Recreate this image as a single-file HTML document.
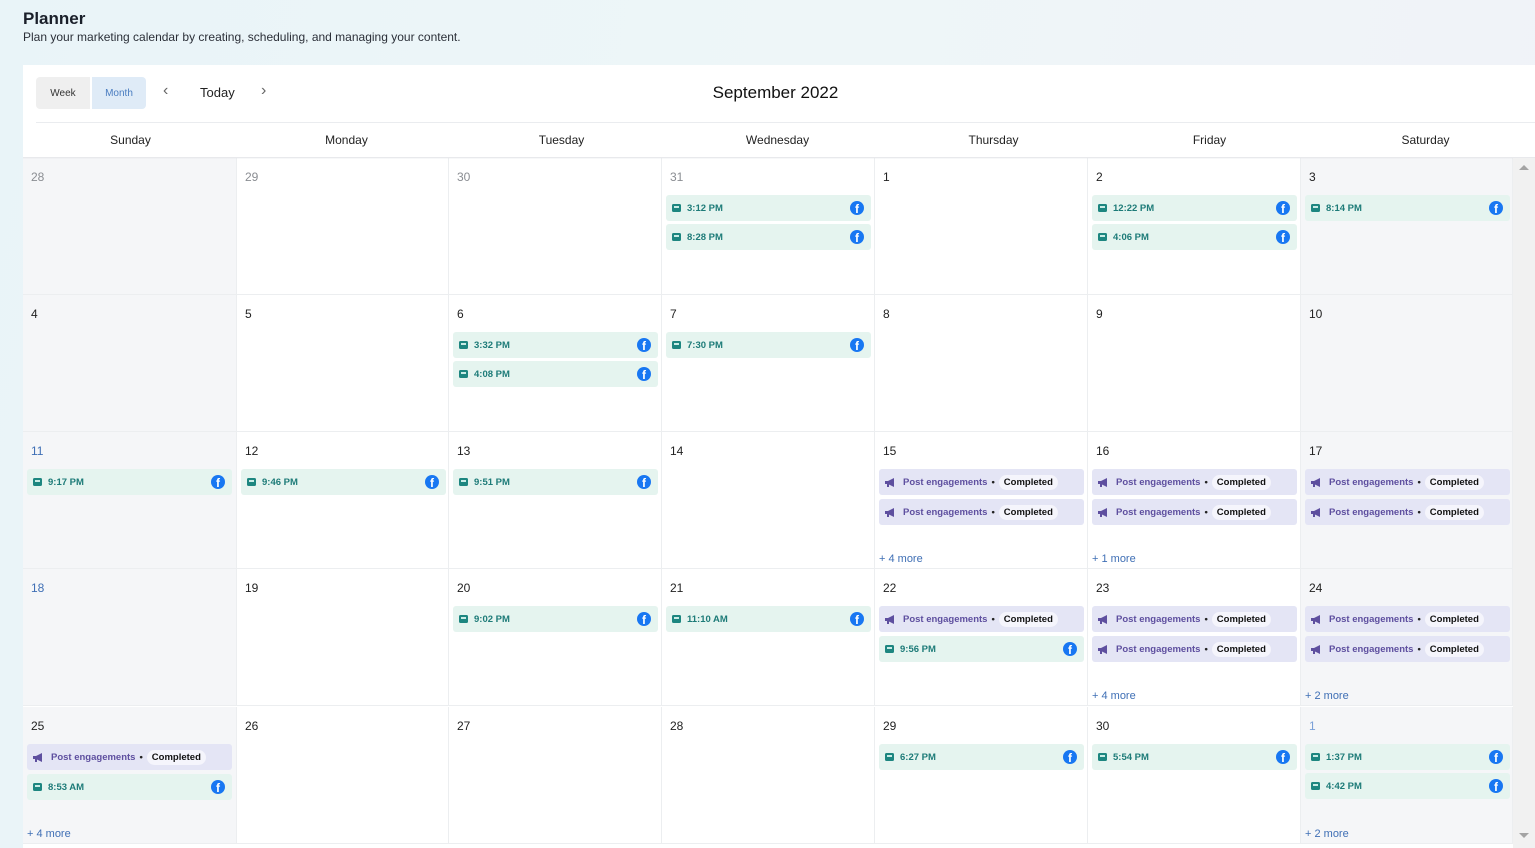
<!DOCTYPE html>
<html><head><meta charset="utf-8"><style>
*{box-sizing:border-box;margin:0;padding:0}
body{width:1535px;height:848px;overflow:hidden;font-family:"Liberation Sans",sans-serif;background:linear-gradient(100deg,#e9f4f8 0%,#eef6f8 50%,#f1f2f8 100%);position:relative}
h1{position:absolute;left:23px;top:9px;font-size:17px;font-weight:bold;color:#1a1f2a}
.sub{position:absolute;left:23px;top:30px;font-size:12px;color:#2b2f38}
.card{position:absolute;left:23px;top:65px;width:1512px;height:783px;background:#fff}
.tog{position:absolute;left:13px;top:12px;height:32px;width:110px;border-radius:4px;overflow:hidden;display:flex;font-size:10px}
.tog div{width:54px;display:flex;align-items:center;justify-content:center}
.wk{background:#efefef;color:#333;margin-right:2px}.mo{background:#dfebf7;color:#4a7dc0}
.nav{position:absolute;top:20px;font-size:13px;color:#222}
.title{position:absolute;left:0;width:1505px;text-align:center;top:18px;font-size:17px;color:#111}
.hline{position:absolute;left:13px;right:0;top:57px;border-top:1px solid #eaecef}
.dow{position:absolute;top:57px;height:35px;width:215px;text-align:center;line-height:36px;font-size:12px;color:#222}
.shadow{position:absolute;left:0;right:0;top:92px;height:2px;background:linear-gradient(#e0e2e5,#fff0)}
.cell{position:absolute;width:213px;height:137px;border-right:1px solid #eceef0;border-bottom:1px solid #eceef0;background:#fff}
.we{background:#f5f6f8}
.n{position:absolute;left:8px;top:12px;font-size:12px;color:#222}
.g{color:#8a8d92}.b{color:#3f6fb5}
.chips{position:absolute;left:4px;top:37px;width:205px}
.t{height:26px;background:#e5f4ef;border-radius:3px;margin-bottom:3px;display:flex;align-items:center;padding-left:6px;font-size:9.5px;font-weight:bold;color:#1d7b78;position:relative}
.t i{display:inline-block;width:9px;height:8px;background:#1d8680;border-radius:1.5px;margin-right:6px;position:relative}
.t i:after{content:"";position:absolute;left:2px;top:2px;width:5px;height:2px;background:#c9ece6}
.fb{position:absolute;right:7px;top:6px;width:14px;height:14px;border-radius:50%;background:#1877f2;color:#fff;font-size:12px;font-weight:bold;text-align:center;line-height:17px;overflow:hidden;font-family:"Liberation Sans",sans-serif}
.e{height:26px;background:#e4e5f5;border-radius:3px;margin-bottom:4px;display:flex;align-items:center;padding-left:6px;font-size:9.5px;font-weight:bold;color:#5e4f9f}
.e svg{margin-right:7px}
.e .dot{color:#222;margin:0 4px}
.e .p{background:#f5f5fc;color:#111;border-radius:8px;padding:2px 5px}
.more{position:absolute;left:4px;top:121px;font-size:11px;color:#3f6fb5}
.sb{position:absolute;left:1490px;top:93px;width:22px;height:690px;background:#f1f1f1}
.sb:before{content:"";position:absolute;left:6px;top:7px;border:5px solid transparent;border-bottom:5px solid #a3a3a3;border-top:0}
.sb:after{content:"";position:absolute;left:6px;bottom:10px;border:5px solid transparent;border-top:5px solid #a3a3a3;border-bottom:0}
.k0{left:0;width:214px}.k1{left:214px;width:212px}.k2{left:426px;width:213px}.k3{left:639px;width:213px}.k4{left:852px;width:213px}.k5{left:1065px;width:213px}.k6{left:1278px;width:212px}
</style></head><body>
<h1>Planner</h1>
<div class="sub">Plan your marketing calendar by creating, scheduling, and managing your content.</div>
<div class="card">
<div class="tog"><div class="wk">Week</div><div class="mo">Month</div></div>
<div class="nav" style="left:140px;top:17px;font-size:16px;color:#666">‹</div>
<div class="nav" style="left:177px">Today</div>
<div class="nav" style="left:238px;top:17px;font-size:16px;color:#666">›</div>
<div class="title">September 2022</div>
<div class="hline"></div>
<div class="dow" style="left:0">Sunday</div><div class="dow" style="left:216px">Monday</div><div class="dow" style="left:431px">Tuesday</div><div class="dow" style="left:647px">Wednesday</div><div class="dow" style="left:863px">Thursday</div><div class="dow" style="left:1079px">Friday</div><div class="dow" style="left:1295px">Saturday</div>

<div class="cell we k0" style="top:93px"><span class="n g">28</span></div>
<div class="cell k1" style="top:93px"><span class="n g">29</span></div>
<div class="cell k2" style="top:93px"><span class="n g">30</span></div>
<div class="cell k3" style="top:93px"><span class="n g">31</span><div class="chips"><div class="t"><i></i>3:12 PM<b class="fb">f</b></div><div class="t"><i></i>8:28 PM<b class="fb">f</b></div></div></div>
<div class="cell k4" style="top:93px"><span class="n">1</span></div>
<div class="cell k5" style="top:93px"><span class="n">2</span><div class="chips"><div class="t"><i></i>12:22 PM<b class="fb">f</b></div><div class="t"><i></i>4:06 PM<b class="fb">f</b></div></div></div>
<div class="cell we k6" style="top:93px"><span class="n">3</span><div class="chips"><div class="t"><i></i>8:14 PM<b class="fb">f</b></div></div></div>

<div class="cell we k0" style="top:230px"><span class="n">4</span></div>
<div class="cell k1" style="top:230px"><span class="n">5</span></div>
<div class="cell k2" style="top:230px"><span class="n">6</span><div class="chips"><div class="t"><i></i>3:32 PM<b class="fb">f</b></div><div class="t"><i></i>4:08 PM<b class="fb">f</b></div></div></div>
<div class="cell k3" style="top:230px"><span class="n">7</span><div class="chips"><div class="t"><i></i>7:30 PM<b class="fb">f</b></div></div></div>
<div class="cell k4" style="top:230px"><span class="n">8</span></div>
<div class="cell k5" style="top:230px"><span class="n">9</span></div>
<div class="cell we k6" style="top:230px"><span class="n">10</span></div>

<div class="cell we k0" style="top:367px"><span class="n b">11</span><div class="chips"><div class="t"><i></i>9:17 PM<b class="fb">f</b></div></div></div>
<div class="cell k1" style="top:367px"><span class="n">12</span><div class="chips"><div class="t"><i></i>9:46 PM<b class="fb">f</b></div></div></div>
<div class="cell k2" style="top:367px"><span class="n">13</span><div class="chips"><div class="t"><i></i>9:51 PM<b class="fb">f</b></div></div></div>
<div class="cell k3" style="top:367px"><span class="n">14</span></div>
<div class="cell k4" style="top:367px"><span class="n">15</span><div class="chips">
<div class="e"><svg width="11" height="9" viewBox="0 0 11 9"><path d="M0 3h3l6-3v9L3 6H0z M2 6h2v3H2z" fill="#5e4f9f"/></svg>Post engagements<span class="dot">•</span><span class="p">Completed</span></div>
<div class="e"><svg width="11" height="9" viewBox="0 0 11 9"><path d="M0 3h3l6-3v9L3 6H0z M2 6h2v3H2z" fill="#5e4f9f"/></svg>Post engagements<span class="dot">•</span><span class="p">Completed</span></div></div><span class="more">+ 4 more</span></div>
<div class="cell k5" style="top:367px"><span class="n">16</span><div class="chips">
<div class="e"><svg width="11" height="9" viewBox="0 0 11 9"><path d="M0 3h3l6-3v9L3 6H0z M2 6h2v3H2z" fill="#5e4f9f"/></svg>Post engagements<span class="dot">•</span><span class="p">Completed</span></div>
<div class="e"><svg width="11" height="9" viewBox="0 0 11 9"><path d="M0 3h3l6-3v9L3 6H0z M2 6h2v3H2z" fill="#5e4f9f"/></svg>Post engagements<span class="dot">•</span><span class="p">Completed</span></div></div><span class="more">+ 1 more</span></div>
<div class="cell we k6" style="top:367px"><span class="n">17</span><div class="chips">
<div class="e"><svg width="11" height="9" viewBox="0 0 11 9"><path d="M0 3h3l6-3v9L3 6H0z M2 6h2v3H2z" fill="#5e4f9f"/></svg>Post engagements<span class="dot">•</span><span class="p">Completed</span></div>
<div class="e"><svg width="11" height="9" viewBox="0 0 11 9"><path d="M0 3h3l6-3v9L3 6H0z M2 6h2v3H2z" fill="#5e4f9f"/></svg>Post engagements<span class="dot">•</span><span class="p">Completed</span></div></div></div>

<div class="cell we k0" style="top:504px"><span class="n b">18</span></div>
<div class="cell k1" style="top:504px"><span class="n">19</span></div>
<div class="cell k2" style="top:504px"><span class="n">20</span><div class="chips"><div class="t"><i></i>9:02 PM<b class="fb">f</b></div></div></div>
<div class="cell k3" style="top:504px"><span class="n">21</span><div class="chips"><div class="t"><i></i>11:10 AM<b class="fb">f</b></div></div></div>
<div class="cell k4" style="top:504px"><span class="n">22</span><div class="chips">
<div class="e"><svg width="11" height="9" viewBox="0 0 11 9"><path d="M0 3h3l6-3v9L3 6H0z M2 6h2v3H2z" fill="#5e4f9f"/></svg>Post engagements<span class="dot">•</span><span class="p">Completed</span></div>
<div class="t"><i></i>9:56 PM<b class="fb">f</b></div></div></div>
<div class="cell k5" style="top:504px"><span class="n">23</span><div class="chips">
<div class="e"><svg width="11" height="9" viewBox="0 0 11 9"><path d="M0 3h3l6-3v9L3 6H0z M2 6h2v3H2z" fill="#5e4f9f"/></svg>Post engagements<span class="dot">•</span><span class="p">Completed</span></div>
<div class="e"><svg width="11" height="9" viewBox="0 0 11 9"><path d="M0 3h3l6-3v9L3 6H0z M2 6h2v3H2z" fill="#5e4f9f"/></svg>Post engagements<span class="dot">•</span><span class="p">Completed</span></div></div><span class="more">+ 4 more</span></div>
<div class="cell we k6" style="top:504px"><span class="n">24</span><div class="chips">
<div class="e"><svg width="11" height="9" viewBox="0 0 11 9"><path d="M0 3h3l6-3v9L3 6H0z M2 6h2v3H2z" fill="#5e4f9f"/></svg>Post engagements<span class="dot">•</span><span class="p">Completed</span></div>
<div class="e"><svg width="11" height="9" viewBox="0 0 11 9"><path d="M0 3h3l6-3v9L3 6H0z M2 6h2v3H2z" fill="#5e4f9f"/></svg>Post engagements<span class="dot">•</span><span class="p">Completed</span></div></div><span class="more">+ 2 more</span></div>

<div class="cell we k0" style="top:642px"><span class="n">25</span><div class="chips">
<div class="e"><svg width="11" height="9" viewBox="0 0 11 9"><path d="M0 3h3l6-3v9L3 6H0z M2 6h2v3H2z" fill="#5e4f9f"/></svg>Post engagements<span class="dot">•</span><span class="p">Completed</span></div>
<div class="t"><i></i>8:53 AM<b class="fb">f</b></div></div><span class="more">+ 4 more</span></div>
<div class="cell k1" style="top:642px"><span class="n">26</span></div>
<div class="cell k2" style="top:642px"><span class="n">27</span></div>
<div class="cell k3" style="top:642px"><span class="n">28</span></div>
<div class="cell k4" style="top:642px"><span class="n">29</span><div class="chips"><div class="t"><i></i>6:27 PM<b class="fb">f</b></div></div></div>
<div class="cell k5" style="top:642px"><span class="n">30</span><div class="chips"><div class="t"><i></i>5:54 PM<b class="fb">f</b></div></div></div>
<div class="cell we k6" style="top:642px"><span class="n b" style="color:#7aa0d8">1</span><div class="chips"><div class="t"><i></i>1:37 PM<b class="fb">f</b></div><div class="t"><i></i>4:42 PM<b class="fb">f</b></div></div><span class="more">+ 2 more</span></div>

<div class="shadow"></div>
<div class="sb"></div>
</div>
</body></html>
